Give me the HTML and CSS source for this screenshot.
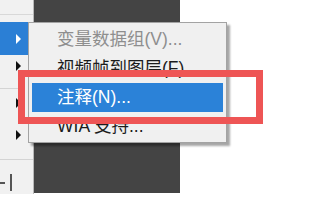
FILE: index.html
```html
<!DOCTYPE html>
<html>
<head>
<meta charset="utf-8">
<link rel="stylesheet" href="styles.css">
</head>
<body>
<div class="app">
  <div class="side">
    <div class="side-top"></div>
    <div class="side-gap"></div>
    <div class="side-item active"><span class="arrow white"></span></div>
    <div class="side-item s2"><span class="arrow"></span></div>
    <div class="side-sep"></div>
    <div class="side-item s3"><span class="arrow"></span></div>
    <div class="side-item s4"><span class="arrow"></span></div>
    <div class="side-sep2"></div>
    <div class="side-bottom"><span class="dash"></span><span class="bar"></span></div>
  </div>
  <div class="dark"></div>
</div>
<div class="menu">
  <div class="item disabled">变量数据组(V)...</div>
  <div class="item">视频帧到图层(F)...</div>
  <div class="item selected">注释(N)...</div>
  <div class="item">WIA 支持...</div>
</div>
<div class="mark"></div>
</body>
</html>
```
FILE: styles.css
```css
html, body {
  margin: 0;
  padding: 0;
}
body {
  width: 313px;
  height: 201px;
  background: #ffffff;
  position: relative;
  overflow: hidden;
  font-family: "Liberation Sans", "Noto Sans CJK SC", sans-serif;
}
.app {
  display: flex;
  height: 194px;
}
.side {
  width: 33px;
  background: #f1f1f1;
  border-right: 1px solid #b8b8b8;
  display: flex;
  flex-direction: column;
}
.side-top {
  height: 14px;
  border-bottom: 1px solid #d8d8d8;
}
.side-gap {
  height: 7px;
}
.side-item {
  display: flex;
  align-items: center;
  padding-left: 16px;
}
.side-item.active {
  height: 33px;
  background: #2b7fd5;
}
.side-item.s2 { height: 21px; }
.side-item.s3 { height: 28px; }
.side-item.s4 { height: 36px; }
.side-sep {
  height: 12px;
  border-bottom: 1px solid #d4d4d4;
  width: 20px;
}
.side-sep2 {
  height: 6px;
  border-bottom: 1px solid #d4d4d4;
}
.arrow {
  width: 0;
  height: 0;
  border-top: 5px solid transparent;
  border-bottom: 5px solid transparent;
  border-left: 5px solid #111;
}
.arrow.white {
  border-left-color: #ffffff;
}
.side-bottom {
  position: relative;
  flex: 1;
}
.dash {
  position: absolute;
  left: 0;
  top: 22px;
  width: 5px;
  height: 2px;
  background: #555;
}
.bar {
  position: absolute;
  left: 10px;
  top: 14px;
  width: 2px;
  height: 17px;
  background: #555;
}
.dark {
  width: 146px;
  height: 193px;
  background: #444444;
}
.menu {
  position: absolute;
  left: 28px;
  top: 22px;
  width: 191px;
  background: #f0f0f0;
  border: 1px solid #a3a3a3;
  padding: 2px 3px 1px 3px;
  box-shadow: 3px 3px 2px rgba(0, 0, 0, 0.35);
}
.item {
  height: 29px;
  line-height: 29px;
  padding-left: 25px;
  font-size: 17.5px;
  color: #1c1c1c;
  white-space: nowrap;
}
.item.disabled {
  color: #8e8e8e;
}
.item.selected {
  background: #2b82d8;
  color: #ffffff;
}
.mark {
  position: absolute;
  left: 18px;
  top: 70px;
  width: 245px;
  height: 54px;
  box-sizing: border-box;
  border: 7px solid #ee5555;
}
```
